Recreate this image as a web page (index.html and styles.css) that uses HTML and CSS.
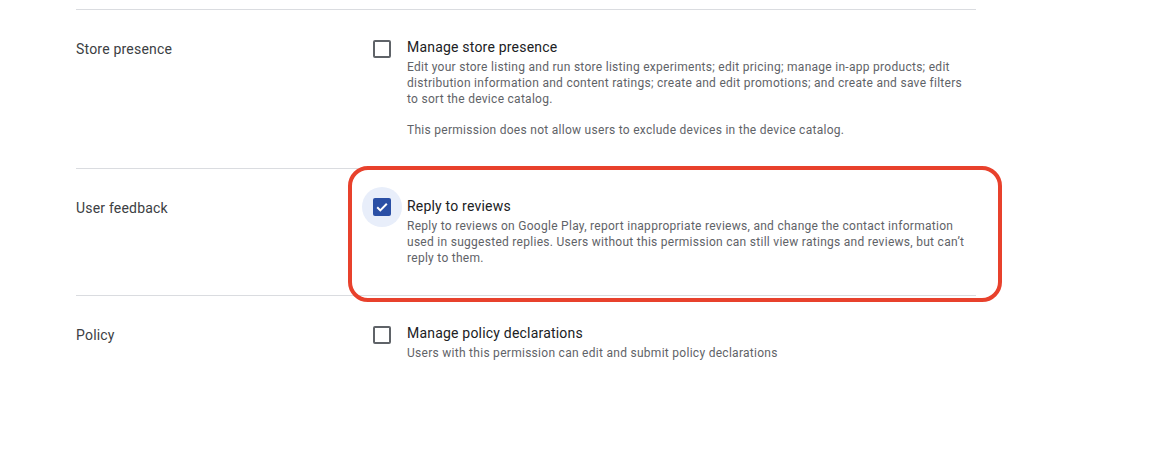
FILE: index.html
```html
<!DOCTYPE html>
<html>
<head>
<meta charset="utf-8">
<link rel="stylesheet" href="styles.css">
</head>
<body>
<div class="list">
  <div class="row">
    <div class="label">Store presence</div>
    <div class="check"><span class="box"></span></div>
    <div class="text">
      <div class="title">Manage store presence</div>
      <p class="desc">Edit your store listing and run store listing experiments; edit pricing; manage in-app products; edit distribution information and content ratings; create and edit promotions; and create and save filters to sort the device catalog.</p>
      <p class="desc gap">This permission does not allow users to exclude devices in the device catalog.</p>
    </div>
  </div>
  <div class="row highlighted">
    <div class="label">User feedback</div>
    <div class="check checked"><span class="box"><svg viewBox="0 0 18 18" width="18" height="18"><path d="M4.2 9.3l3.1 3.1 6.5-6.6" fill="none" stroke="#fff" stroke-width="2"/></svg></span></div>
    <div class="text">
      <div class="title">Reply to reviews</div>
      <p class="desc">Reply to reviews on Google Play, report inappropriate reviews, and change the contact information used in suggested replies. Users without this permission can still view ratings and reviews, but can’t reply to them.</p>
    </div>
    <div class="annot"></div>
  </div>
  <div class="row last">
    <div class="label">Policy</div>
    <div class="check"><span class="box"></span></div>
    <div class="text">
      <div class="title">Manage policy declarations</div>
      <p class="desc">Users with this permission can edit and submit policy declarations</p>
    </div>
  </div>
</div>
</body>
</html>
```
FILE: styles.css
```css
html, body {
  margin: 0;
  padding: 0;
  background: #fff;
}
body {
  font-family: Roboto, "Liberation Sans", Arial, sans-serif;
  color: #3c4043;
}
.list {
  width: 900px;
  margin: 9px 0 0 76px;
  border-top: 1px solid #dadce0;
}
.row {
  position: relative;
  display: flex;
  align-items: flex-start;
  padding: 27px 0 30px 0;
  border-bottom: 1px solid #dadce0;
}
.row.highlighted {
  padding-bottom: 29px;
}
.row.last {
  border-bottom: none;
}
.label {
  width: 286px;
  flex: none;
  font-size: 14px;
  line-height: 20px;
  letter-spacing: 0.2px;
  margin-top: 2px;
  color: #3c4043;
}
.check {
  width: 40px;
  height: 40px;
  flex: none;
  margin-top: -9px;
  margin-right: 5px;
  border-radius: 50%;
  display: flex;
  align-items: center;
  justify-content: center;
}
.box {
  width: 18px;
  height: 18px;
  box-sizing: border-box;
  border: 2px solid #5f6368;
  border-radius: 2px;
  display: block;
  margin-top: 1px;
}
.check.checked {
  background: #e8eefa;
}
.check.checked .box {
  border: none;
  background: #2a4fa5;
  margin-top: 0;
}
.check.checked svg {
  display: block;
}
.text {
  width: 569px;
  flex: none;
}
.title {
  font-size: 14px;
  line-height: 20px;
  letter-spacing: 0.2px;
  color: #202124;
  margin-bottom: 2px;
}
.desc {
  margin: 0;
  font-size: 12px;
  line-height: 16px;
  letter-spacing: 0.28px;
  color: #5f6368;
}
.desc.gap {
  margin-top: 15px;
}
.annot {
  position: absolute;
  left: 272px;
  right: -26px;
  top: -3px;
  bottom: -7px;
  border: 4px solid #e8412c;
  border-radius: 20px;
  pointer-events: none;
}
```
